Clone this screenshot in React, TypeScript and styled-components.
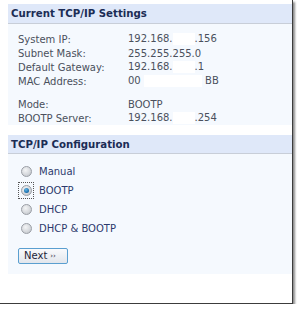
import React from 'react';
import styled, { createGlobalStyle } from 'styled-components';

const GlobalStyle = createGlobalStyle`
  body {
    margin: 0;
    background: #ffffff;
    font-family: "DejaVu Sans", Verdana, sans-serif;
  }
`;

const Frame = styled.div`
  width: 293px;
  height: 304px;
  box-sizing: border-box;
  padding: 4px 0 0 8px;
  background: #ffffff;
  border-right: 1px solid #3c3c3c;
  border-bottom: 1px solid #3c3c3c;
  box-shadow: 2px 2px 2px rgba(0, 0, 0, 0.45);
  display: flex;
  flex-direction: column;
  gap: 10px;
`;

const Section = styled.section`
  background: #f5f9fe;
`;

const Header = styled.h2<{ $h: number }>`
  margin: 0;
  height: ${(p) => p.$h}px;
  box-sizing: border-box;
  padding-left: 3px;
  display: flex;
  align-items: center;
  background: #dfe8f9;
  border-bottom: 1px solid #c8ced8;
  color: #1b2c55;
  font-size: 10.2px;
  font-weight: bold;
`;

const InfoBody = styled.div`
  padding: 8px 0 0 10px;
  display: flex;
  flex-direction: column;
`;

const Group = styled.div`
  & + & {
    margin-top: 9px;
  }
`;

const Row = styled.div`
  display: flex;
  height: 14px;
  align-items: center;
  font-size: 10px;
  color: #4a505c;
`;

const Label = styled.span`
  width: 110px;
`;

const Hidden = styled.span<{ $w: number }>`
  display: inline-block;
  width: ${(p) => p.$w}px;
  height: 12px;
  background: #ffffff;
  vertical-align: middle;
`;

const ConfigBody = styled.div`
  padding: 8px 0 10px 10px;
  display: flex;
  flex-direction: column;
`;

const Option = styled.label`
  display: flex;
  align-items: center;
  height: 19px;
  gap: 5px;
  font-size: 10px;
  color: #2c3a6c;
`;

const RadioBox = styled.span<{ $focus?: boolean }>`
  width: 16px;
  height: 17px;
  display: flex;
  align-items: center;
  justify-content: center;
  box-sizing: border-box;
  border: 1px dotted ${(p) => (p.$focus ? '#555' : 'transparent')};
`;

const Radio = styled.span<{ $on?: boolean }>`
  width: 11px;
  height: 11px;
  border-radius: 50%;
  box-sizing: border-box;
  border: 1px solid #9a9ea5;
  background: radial-gradient(circle at 40% 35%, #f4f5f6 0%, #d6d9dd 55%, #b9bdc3 100%);
  display: flex;
  align-items: center;
  justify-content: center;

  &::after {
    content: '';
    display: ${(p) => (p.$on ? 'block' : 'none')};
    width: 5px;
    height: 5px;
    border-radius: 50%;
    background: radial-gradient(circle at 40% 35%, #5fb6e6 0%, #1769a8 70%, #0b3f6e 100%);
  }
`;

const Button = styled.button`
  margin-top: 10px;
  width: 50px;
  height: 16px;
  padding: 0 0 0 5px;
  box-sizing: border-box;
  border: 1px solid #5a9fd0;
  border-radius: 2px;
  background: linear-gradient(#f9fafc, #e2e6ec);
  color: #1d2438;
  font-family: "DejaVu Sans", Verdana, sans-serif;
  font-size: 10px;
  text-align: left;
  line-height: 14px;
`;

const Arrows = styled.span`
  font-size: 7px;
  margin-left: 3px;
  vertical-align: 1px;
`;

const info = [
  [
    ['System IP:', <>192.168.<Hidden $w={22} />.156</>],
    ['Subnet Mask:', '255.255.255.0'],
    ['Default Gateway:', <>192.168.<Hidden $w={22} />.1</>],
    ['MAC Address:', <>00 <Hidden $w={58} /> BB</>],
  ],
  [
    ['Mode:', 'BOOTP'],
    ['BOOTP Server:', <>192.168.<Hidden $w={22} />.254</>],
  ],
] as const;

const modes = ['Manual', 'BOOTP', 'DHCP', 'DHCP & BOOTP'];

export default function App() {
  return (
    <>
      <GlobalStyle />
      <Frame>
        <Section>
          <Header $h={20}>Current TCP/IP Settings</Header>
          <InfoBody>
            {info.map((group, i) => (
              <Group key={i}>
                {group.map(([label, value]) => (
                  <Row key={label as string}>
                    <Label>{label}</Label>
                    <span>{value}</span>
                  </Row>
                ))}
              </Group>
            ))}
          </InfoBody>
        </Section>
        <Section>
          <Header $h={19}>TCP/IP Configuration</Header>
          <ConfigBody>
            {modes.map((m) => (
              <Option key={m}>
                <RadioBox $focus={m === 'BOOTP'}>
                  <Radio $on={m === 'BOOTP'} />
                </RadioBox>
                {m}
              </Option>
            ))}
            <div>
              <Button>
                Next<Arrows>››</Arrows>
              </Button>
            </div>
          </ConfigBody>
        </Section>
      </Frame>
    </>
  );
}
